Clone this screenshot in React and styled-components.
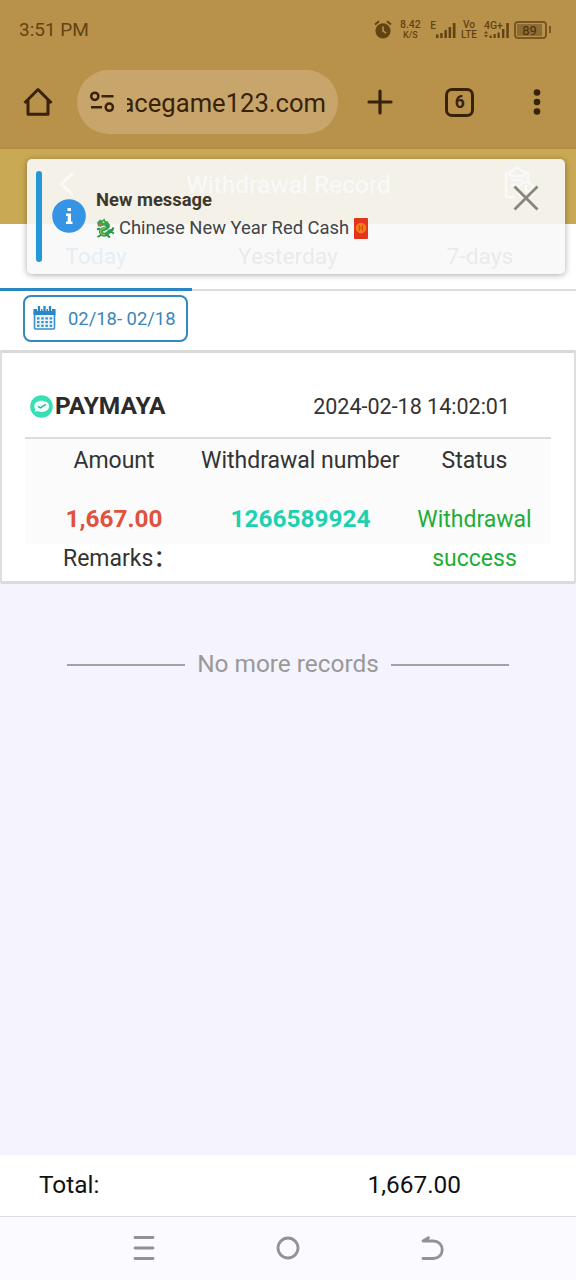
import React from "react";
import styled, { createGlobalStyle } from "styled-components";

const Global = createGlobalStyle`
  * { box-sizing: border-box; }
  body { margin: 0; background: #f5f3fd; font-family: Roboto, "Liberation Sans", "Noto Sans CJK SC", sans-serif; }
  svg { display: block; flex: none; }
`;

const Screen = styled.div`
  position: relative;
  display: flex;
  flex-direction: column;
  width: 576px;
  height: 1280px;
  overflow: hidden;
  background: #f5f3fd;
  color: #333;
  white-space: nowrap;
`;

const StatusBar = styled.div`
  display: flex;
  align-items: center;
  justify-content: space-between;
  height: 60px;
  padding: 0 25px 1px 19px;
  background: #b8924a;
  color: #644312;
`;
const Clock = styled.span`
  font-size: 19px;
`;
const StatusIcons = styled.div`
  display: flex;
  align-items: center;
`;
const Stack = styled.div`
  display: flex;
  flex-direction: column;
  align-items: center;
  width: ${(p) => p.$w}px;
  margin-left: ${(p) => p.$ml}px;
  font-weight: 500;
  font-size: ${(p) => p.$size}px;
  line-height: 10px;
`;
const Small = styled.span`
  font-size: 9px;
`;

const BrowserBar = styled.div`
  display: flex;
  align-items: center;
  height: 89px;
  padding: 0 0 3px 22px;
  background: #b8924a;
  border-bottom: 2px solid #b78b42;
`;
const AddressPill = styled.div`
  display: flex;
  align-items: center;
  width: 262px;
  height: 64px;
  margin-left: 23px;
  padding-left: 12px;
  border-radius: 32px;
  background: #c8a66b;
`;
const UrlClip = styled.div`
  display: flex;
  justify-content: flex-end;
  width: 199px;
  margin-left: 12px;
  padding-top: 2px;
  overflow: hidden;
  color: #38220a;
  font-size: 25.6px;
`;
const BarIcon = styled.div`
  display: flex;
  align-items: center;
  justify-content: center;
  width: ${(p) => p.$w}px;
`;
const TabCount = styled.div`
  display: flex;
  align-items: center;
  justify-content: center;
  width: 29px;
  height: 29px;
  border: 3px solid #38220a;
  border-radius: 7px;
  color: #38220a;
  font-size: 17.5px;
  font-weight: 700;
`;

const PageHeader = styled.div`
  display: flex;
  align-items: center;
  justify-content: space-between;
  height: 75px;
  padding: 0 38px 5px 57px;
  background: #caa955;
  color: #fff;
  font-size: 24.5px;
`;
const Tabs = styled.div`
  display: grid;
  grid-template-columns: repeat(3, 1fr);
  height: 67px;
  background: #fff;
  border-bottom: 2px solid #dcdcdc;
`;
const Tab = styled.div`
  display: flex;
  align-items: center;
  justify-content: center;
  height: 67px;
  font-size: 22.8px;
  color: ${(p) => (p.$active ? "#2f8dcc" : "#666")};
  border-bottom: ${(p) => (p.$active ? "3px solid #2a86c4" : "3px solid transparent")};
`;
const FilterRow = styled.div`
  height: 59px;
  padding: 4px 0 0 23px;
  background: #fff;
`;
const DateChip = styled.div`
  display: flex;
  align-items: center;
  gap: 12px;
  width: 165px;
  height: 47px;
  padding: 0 0 1px 8px;
  border: 2px solid #3388bd;
  border-radius: 8px;
  color: #3a86b8;
  font-size: 18.4px;
`;

const RecordCard = styled.div`
  height: 234px;
  padding: 0 23px;
  background: #fff;
  border: 2px solid #dedee0;
  border-top: 3px solid #d9d9d9;
  border-bottom: 3px solid #dadadf;
  border-radius: 2px;
`;
const CardHead = styled.div`
  display: flex;
  align-items: center;
  height: 86px;
  padding: 22px 0 0 5px;
  border-bottom: 2px solid #dcdcdc;
`;
const Provider = styled.div`
  flex: 1;
  margin-left: 2px;
  font-size: 24.5px;
  font-weight: 700;
  line-height: 28px;
  padding-bottom: 1px;
  color: #2b2b2b;
`;
const Stamp = styled.div`
  margin-right: 41px;
  font-size: 21.5px;
`;
const CardGrid = styled.div`
  display: grid;
  grid-template-columns: 178px 195px 153px;
  height: 105px;
  background: #fbfbfb;
  text-align: center;
  font-size: 23px;
`;
const Label = styled.div`
  height: 61px;
  margin-left: ${(p) => p.$shift || 0}px;
  line-height: 43px;
`;
const Value = styled.div`
  padding-top: ${(p) => (p.$bold ? 0 : 1)}px;
  line-height: 38.5px;
  color: ${(p) => p.$color};
  font-weight: ${(p) => (p.$bold ? 700 : 400)};
  font-size: ${(p) => (p.$bold ? 24.4 : 23)}px;
`;
const Remarks = styled.div`
  padding-left: 38px;
  font-size: 23px;
  line-height: 29px;
`;
const WideColon = styled.span`
  font-family: "Noto Sans CJK SC", sans-serif;
  font-weight: 500;
  line-height: 0;
`;

const ListEnd = styled.div`
  display: flex;
  flex: 1;
  align-items: flex-start;
  justify-content: center;
  gap: 12px;
  padding-top: 65px;
  color: #999;
  font-size: 24.4px;
  line-height: 29px;
`;
const Rule = styled.div`
  width: 118px;
  height: 2px;
  margin-top: 15px;
  background: #a3a3a3;
`;

const TotalBar = styled.div`
  display: flex;
  align-items: center;
  justify-content: space-between;
  height: 61px;
  padding: 0 115px 2px 39px;
  background: #fff;
  color: #111;
  font-size: 24.4px;
`;
const NavBar = styled.div`
  display: flex;
  align-items: center;
  justify-content: center;
  gap: 120px;
  height: 64px;
  padding-bottom: 2px;
  border-top: 1px solid #dedee2;
  background: #fbfaff;
`;

const Toast = styled.div`
  position: absolute;
  top: 159px;
  left: 27px;
  display: flex;
  align-items: flex-start;
  width: 538px;
  height: 115px;
  padding: 12px 26px 12px 9px;
  border-radius: 5px;
  background: rgba(248, 248, 248, 0.9);
  box-shadow: 0 1px 6px rgba(0, 0, 0, 0.34);
`;
const ToastAccent = styled.div`
  width: 6px;
  height: 91px;
  border-radius: 3px;
  background: #2496da;
`;
const ToastIcon = styled.div`
  margin: 28px 0 0 10px;
`;
const ToastBody = styled.div`
  flex: 1;
  margin: 15px 0 0 10px;
  color: #444;
  font-size: 18.4px;
  line-height: 28px;
`;
const ToastTitle = styled.div`
  color: #3d382e;
  font-weight: 700;
`;
const ToastText = styled.div`
  display: flex;
  align-items: center;
  gap: 4px;
`;
const ToastClose = styled.div`
  margin-top: 14px;
`;

const Signal = () => (
  <svg width="20" height="15" viewBox="0 0 20 15" fill="#644312">
    <rect x="0" y="11.5" width="2.5" height="3.5" />
    <rect x="4.200" y="10" width="2.5" height="5" />
    <rect x="8.400" y="7" width="2.5" height="8" />
    <rect x="12.600" y="4" width="2.5" height="11" />
    <rect x="16.800" y="0" width="2.700" height="15" />
  </svg>
);

const SignalGroup = styled.div`
  display: flex;
  align-items: flex-start;
  margin-left: 9px;
  font-size: 10px;
  font-weight: 500;
  line-height: 9px;
  svg { margin-top: 2px; }
`;
const NetworkGroup = styled.div`
  display: flex;
  flex-direction: column;
  width: 25px;
  margin-left: 7px;
  font-size: 10.5px;
  font-weight: 500;
  line-height: 9px;
  svg { margin-top: -7px; }
`;
const Battery = styled.div`
  display: flex;
  align-items: center;
  margin-left: 5px;
  gap: 2px;
`;
const BatteryShell = styled.div`
  width: 33px;
  height: 18px;
  padding: 1px;
  border: 2px solid #7a571e;
  border-radius: 4px;
`;
const BatteryFill = styled.div`
  width: 25px;
  height: 12px;
  background: #8e6c36;
  color: #4b300a;
  font-size: 13px;
  font-weight: 400;
  line-height: 13px;
  text-align: center;
`;
const BatteryTip = styled.div`
  width: 2px;
  height: 7px;
  background: #7a571e;
`;

const Alarm = () => (
  <svg width="18" height="19" viewBox="0 0 18 19" fill="none">
    <circle cx="9" cy="10.8" r="7.6" fill="#644312" />
    <path d="M1 4.6 5 1.3M17 4.6 13 1.3" stroke="#644312" strokeWidth="2" />
    <path d="M9 6.4v4.7l3.3 2" stroke="#b8924a" strokeWidth="1.6" />
  </svg>
);
const Home = () => (
  <svg width="32" height="32" viewBox="0 0 32 32" fill="none" stroke="#38220a" strokeWidth="3">
    <path d="M2.500 17 16 3.500 29.500 17M6 14v14.200h20V14" strokeLinejoin="round" />
  </svg>
);
const Tune = () => (
  <svg width="26" height="22" viewBox="0 0 26 22" fill="none" stroke="#38220a" strokeWidth="2.5">
    <circle cx="5.8" cy="5.3" r="3.6" />
    <path d="M12.5 5.3H24.500M2 16.2h11" />
    <circle cx="20.3" cy="16.2" r="3.6" />
  </svg>
);
const CalendarIcon = () => (
  <svg width="23" height="24" viewBox="0 0 22 24">
    <rect x="1" y="4" width="20" height="19" rx="1" fill="#edf6fc" stroke="#3b8fca" strokeWidth="1.6" />
    <path d="M0 3h22v6H0z" fill="#2b86c8" />
    <path d="M5.5 0v5M11 0v5M16.5 0v5" stroke="#fff" strokeWidth="4" />
    <path d="M5.5 0v5M11 0v5M16.5 0v5" stroke="#2b86c8" strokeWidth="2.300" />
    {[11.3, 15, 18.7].map((y) =>
      [3.5, 7.7, 11.9, 16.1].map((x) => <rect key={x + "-" + y} x={x} y={y} width="2.500" height="2.200" fill="#3b8fca" />)
    )}
  </svg>
);
const Dragon = () => (
  <svg width="19" height="20" viewBox="0 0 19 20" fill="none">
    <path d="M1 4.500 4 1.500 6 2.500 8.500.500 9.500 3 12.500 3.500 12 5.500 14 7 11.500 8.500 8 7.500 5 8.500 2 8.500z" fill="#35a552" />
    <path d="M11 6c2 2.500.5 4-2.500 4.700S4 13 5.500 15.300s4.500 1.700 6 0 2.500-3 4.500-2.300" stroke="#2f9f4d" strokeWidth="4" />
    <path d="M10 9c-1 1.500-5 1.500-5.500 4s2 4 4.500 3.500" stroke="#8fc95a" strokeWidth="1.200" />
    <path d="m1 11.500 3-1M1.500 19l3.500-2M11 17l3 2.500M16 13l1.500-3.500M14.500 13.500l3.500 2" stroke="#2f9449" strokeWidth="2" />
    <path d="M2 7 5.500 6.300" stroke="#d9684a" strokeWidth="1.100" />
    <circle cx="7.500" cy="4.200" r=".9" fill="#e9e65b" />
  </svg>
);
const Envelope = styled.span`
  display: flex;
  align-items: center;
  justify-content: center;
  width: 14px;
  height: 21px;
  margin-left: 1px;
  border-radius: 1px;
  background: #e3341f;
`;
const Seal = () => (
  <svg width="12" height="12" viewBox="0 0 12 12" fill="none" stroke="#d9480f">
    <circle cx="6" cy="6" r="5.300" fill="#f57c16" stroke="none" />
    <path d="M4.300 3v6M7.700 3v6M4.300 6h3.400" />
  </svg>
);
const MayaLogo = () => (
  <svg width="23" height="23" viewBox="0 0 23 23" fill="none">
    <circle cx="11.500" cy="11.500" r="11.300" fill="#38dfb6" />
    <path d="M11.700 5.700c4.200 0 7.400 2.300 7.400 5.500s-3.200 5.700-7.400 5.700c-1.500 0-2.700-.2-3.800-.8l-3.300.7.900-2.500c-.8-.9-1.200-1.900-1.200-3.100 0-3.200 3.200-5.500 7.400-5.500z" fill="#f2fffb" />
    <path d="m8 11.300 2.300 1.600 5.500-3.600" stroke="#35b59b" strokeWidth="1.500" />
  </svg>
);
const ClipboardIcon = () => (
  <svg width="36" height="36" viewBox="0 0 36 36" fill="none" stroke="#fff" strokeWidth="2.500">
    <path d="M8 7H4v24h9M22 7h4v9M8 10V6l7-4.500L22 6v4zM9 14h12M9 19h7" />
    <circle cx="24" cy="24" r="8" />
    <path d="M24 19v6h5" />
  </svg>
);

export default function App() {
  return (
    <Screen>
      <Global />
      <StatusBar>
        <Clock>3:51 PM</Clock>
        <StatusIcons>
          <Alarm />
          <Stack $w={22} $ml={7} $size={10.5}>
            <span>8.42</span>
            <Small>K/S</Small>
          </Stack>
          <SignalGroup>
            <span>E</span>
            <Signal />
          </SignalGroup>
          <Stack $w={16} $ml={5} $size={10}>
            <span>Vo</span>
            <span>LTE</span>
          </Stack>
          <NetworkGroup>
            <span>4G+</span>
            <svg width="25" height="15" viewBox="0 0 25 15" fill="#644312">
              <path d="m0 10.500 2-2.500L4 10.500zM0 12l2 2.500L4 12zM5.500 12.500h2.200V15H5.500zM9.500 11h2.200v4H9.500zM13.500 9.500h2.200V15h-2.200zM18 6h2.400v9H18zM22.300 0h2.500v15h-2.500z" />
            </svg>
          </NetworkGroup>
          <Battery>
            <BatteryShell>
              <BatteryFill>89</BatteryFill>
            </BatteryShell>
            <BatteryTip />
          </Battery>
        </StatusIcons>
      </StatusBar>

      <BrowserBar>
        <Home />
        <AddressPill>
          <Tune />
          <UrlClip>
            <span>acegame123.com</span>
          </UrlClip>
        </AddressPill>
        <BarIcon $w={84}>
          <svg width="26" height="26" viewBox="0 0 26 26" stroke="#38220a" strokeWidth="3.2" strokeLinecap="round">
            <path d="M13 2v22M2 13h22" />
          </svg>
        </BarIcon>
        <BarIcon $w={75}>
          <TabCount>6</TabCount>
        </BarIcon>
        <BarIcon $w={79}>
          <svg width="8" height="28" viewBox="0 0 8 28" fill="#38220a">
            <circle cx="4" cy="4.500" r="3.300" />
            <circle cx="4" cy="14" r="3.300" />
            <circle cx="4" cy="23.500" r="3.300" />
          </svg>
        </BarIcon>
      </BrowserBar>

      <PageHeader>
        <svg width="18" height="26" viewBox="0 0 18 26" fill="none" stroke="#fff" strokeWidth="2.500">
          <path d="M16 2 4 13l12 11" />
        </svg>
        <span>Withdrawal Record</span>
        <ClipboardIcon />
      </PageHeader>
      <Tabs>
        <Tab $active>Today</Tab>
        <Tab>Yesterday</Tab>
        <Tab>7-days</Tab>
      </Tabs>
      <FilterRow>
        <DateChip>
          <CalendarIcon />
          <span>02/18- 02/18</span>
        </DateChip>
      </FilterRow>

      <RecordCard>
        <CardHead>
          <MayaLogo />
          <Provider>PAYMAYA</Provider>
          <Stamp>2024-02-18 14:02:01</Stamp>
        </CardHead>
        <CardGrid>
          <div>
            <Label>Amount</Label>
            <Value $bold $color="#e0523c">1,667.00</Value>
          </div>
          <div>
            <Label $shift={-2}>Withdrawal number</Label>
            <Value $bold $color="#1fd0b0">1266589924</Value>
          </div>
          <div>
            <Label>Status</Label>
            <Value $color="#1fae35">
              Withdrawal
              <br />
              success
            </Value>
          </div>
        </CardGrid>
        <Remarks>
          Remarks<WideColon lang="zh-CN">：</WideColon>
        </Remarks>
      </RecordCard>

      <ListEnd>
        <Rule />
        <span>No more records</span>
        <Rule />
      </ListEnd>

      <TotalBar>
        <span>Total:</span>
        <span>1,667.00</span>
      </TotalBar>
      <NavBar>
        <svg width="24" height="26" viewBox="0 0 24 26" stroke="#929196" strokeWidth="2.800" strokeLinecap="round">
          <path d="M3 2.500h18M3 13h18M3 23.500h18" />
        </svg>
        <svg width="24" height="26" viewBox="0 0 24 26" fill="none" stroke="#929196" strokeWidth="2.800">
          <circle cx="12" cy="13" r="10" />
        </svg>
        <svg width="24" height="26" viewBox="0 0 24 26" fill="none" stroke="#929196" strokeWidth="2.800" strokeLinecap="round" strokeLinejoin="round">
          <path d="M8.500 2.800 3 6h10.500a8.700 8.700 0 0 1 0 17.500H3" />
        </svg>
      </NavBar>

      <Toast>
        <ToastAccent />
        <ToastIcon>
          <svg width="34" height="34" viewBox="0 0 34 34">
            <circle cx="17" cy="17" r="16.800" fill="#3594e4" />
            <path d="M15.500 9h3.500v3h-3.500zM14 14.500h5v8h1.500V25H14v-2.500h1.700V17H14z" fill="#fff" />
          </svg>
        </ToastIcon>
        <ToastBody>
          <ToastTitle>New message</ToastTitle>
          <ToastText>
            <Dragon />
            <span>Chinese New Year Red Cash</span>
            <Envelope>
              <Seal />
            </Envelope>
          </ToastText>
        </ToastBody>
        <ToastClose>
          <svg width="26" height="26" viewBox="0 0 26 26" stroke="#88857e" strokeWidth="2.800">
            <path d="m1.500 1.500 23 23M24.500 1.500l-23 23" />
          </svg>
        </ToastClose>
      </Toast>
    </Screen>
  );
}
